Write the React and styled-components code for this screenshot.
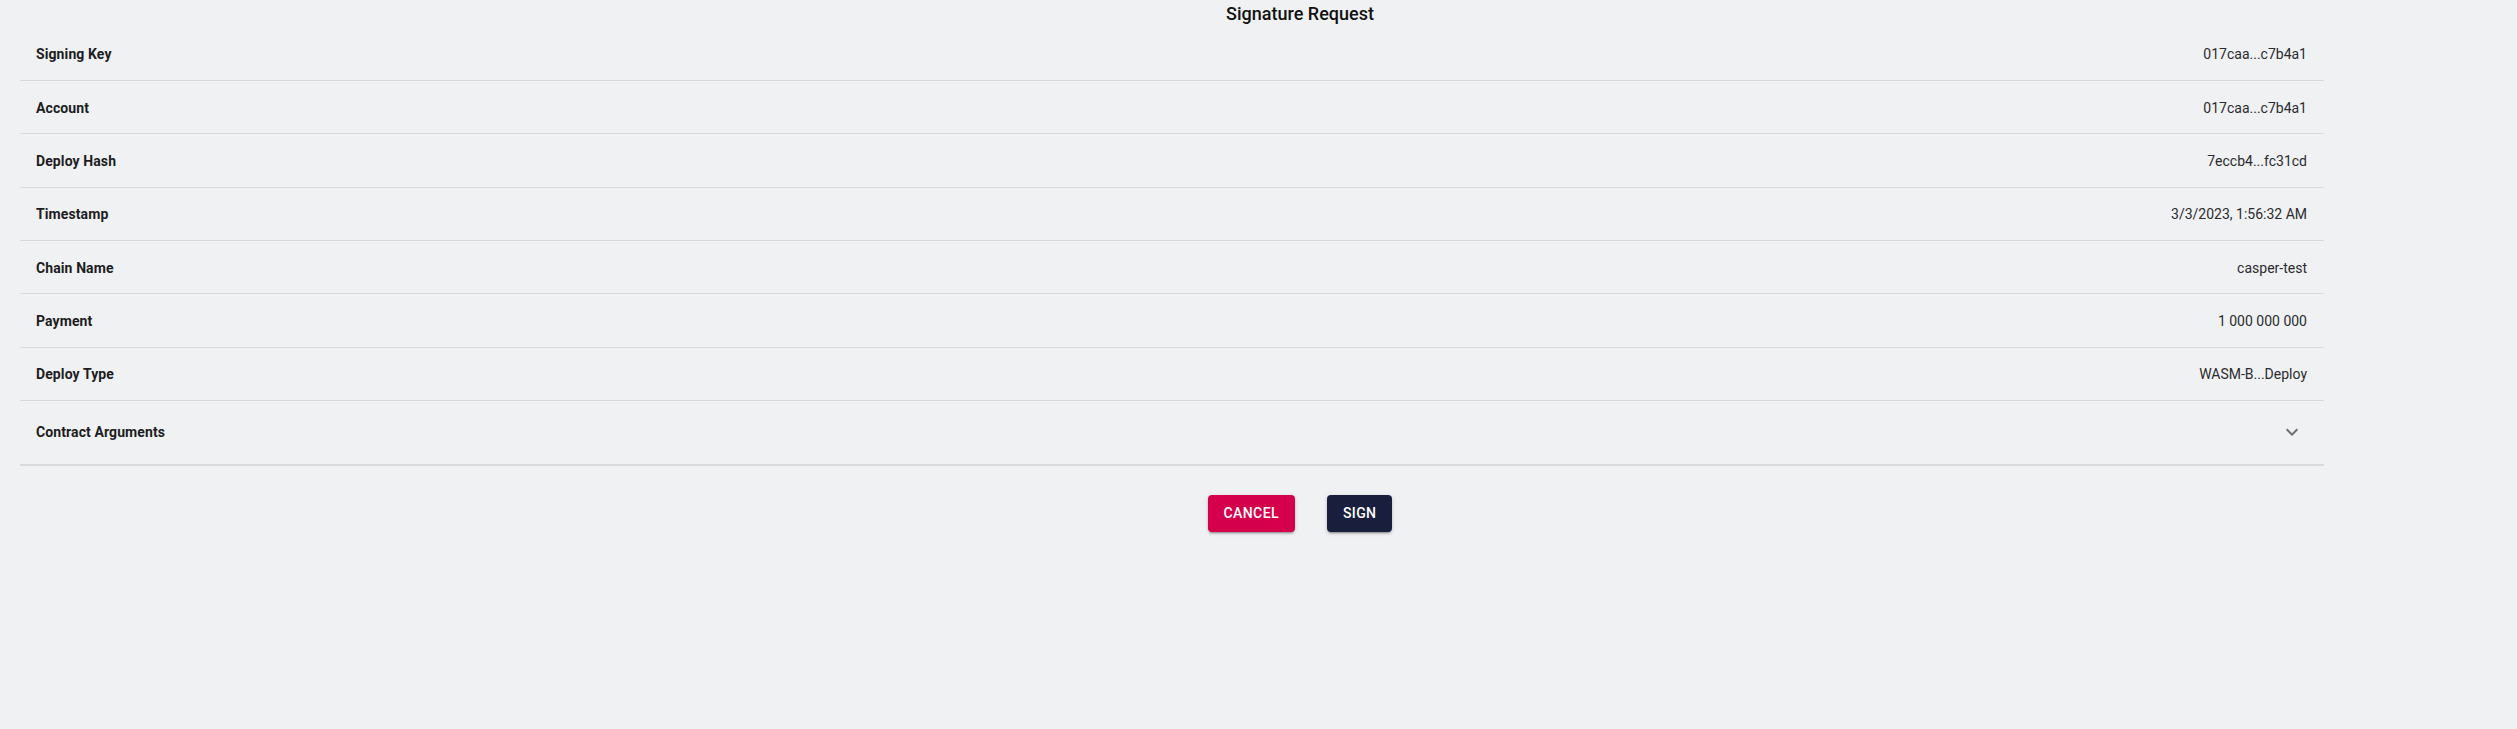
import React from "react";
import styled, { createGlobalStyle } from "styled-components";

const GlobalStyle = createGlobalStyle`
  html, body {
    margin: 0;
    padding: 0;
    background: #f0f1f3;
    font-family: Roboto, "Liberation Sans", Arial, sans-serif;
    overflow: hidden;
  }
`;

const rows = [
  { label: "Signing Key", value: "017caa...c7b4a1" },
  { label: "Account", value: "017caa...c7b4a1" },
  { label: "Deploy Hash", value: "7eccb4...fc31cd" },
  { label: "Timestamp", value: "3/3/2023, 1:56:32 AM" },
  { label: "Chain Name", value: "casper-test" },
  { label: "Payment", value: "1 000 000 000" },
  { label: "Deploy Type", value: "WASM-B...Deploy" },
];

const App = () => {
  return (
    <Page>
      <GlobalStyle />
      <Title>Signature Request</Title>
      <Table>
        {rows.map((row) => (
          <Row key={row.label}>
            <Label>{row.label}</Label>
            <Value>{row.value}</Value>
          </Row>
        ))}
        <AccordionRow>
          <Label>Contract Arguments</Label>
          <ExpandIcon viewBox="0 0 24 24">
            <path d="M16.59 8.59 12 13.17 7.41 8.59 6 10l6 6 6-6z" />
          </ExpandIcon>
        </AccordionRow>
      </Table>
      <Actions>
        <ActionButton $color="#d5004b">Cancel</ActionButton>
        <ActionButton $color="#1a1e3d">Sign</ActionButton>
      </Actions>
    </Page>
  );
};

export default App;

const Page = styled.div`
  width: 2517px;
  height: 729px;
  display: flex;
  flex-direction: column;
  background: #f0f1f3;
`;

const Title = styled.h1`
  margin: 0;
  padding-left: 83px;
  height: 27.7px;
  line-height: 27px;
  font-size: 18px;
  font-weight: 500;
  color: #111;
  text-align: center;
`;

const Table = styled.div`
  width: 2304px;
  margin-left: 20px;
  display: flex;
  flex-direction: column;
  border-bottom: 2px solid #d8d9dc;
`;

const Row = styled.div`
  box-sizing: border-box;
  height: 53.33px;
  display: flex;
  align-items: center;
  justify-content: space-between;
  padding: 1px 17px 0 16px;
  border-bottom: 1px solid #d8d9dc;
`;

const AccordionRow = styled(Row)`
  height: 63px;
  border-bottom: none;
  padding-right: 20px;
  padding-bottom: 1px;
`;

const Label = styled.span`
  font-size: 14px;
  font-weight: 700;
  letter-spacing: 0.1px;
  color: #1d1d1f;
`;

const Value = styled.span`
  font-size: 14px;
  font-weight: 400;
  color: #2b2b2e;
`;

const ExpandIcon = styled.svg`
  width: 24px;
  height: 24px;
  fill: #6e6e73;
`;

const Actions = styled.div`
  display: flex;
  justify-content: center;
  gap: 32px;
  padding-left: 83px;
  margin-top: 29px;
`;

const ActionButton = styled.button`
  height: 37px;
  padding: 0 16px;
  border: none;
  border-radius: 4px;
  background: ${({ $color }) => $color};
  color: #fff;
  font-family: Roboto, "Liberation Sans", Arial, sans-serif;
  font-size: 14px;
  font-weight: 500;
  letter-spacing: 0.4px;
  text-transform: uppercase;
  box-shadow: 0 3px 1px -2px rgba(0, 0, 0, 0.2), 0 2px 2px 0 rgba(0, 0, 0, 0.14),
    0 1px 5px 0 rgba(0, 0, 0, 0.12);
  cursor: pointer;
`;
